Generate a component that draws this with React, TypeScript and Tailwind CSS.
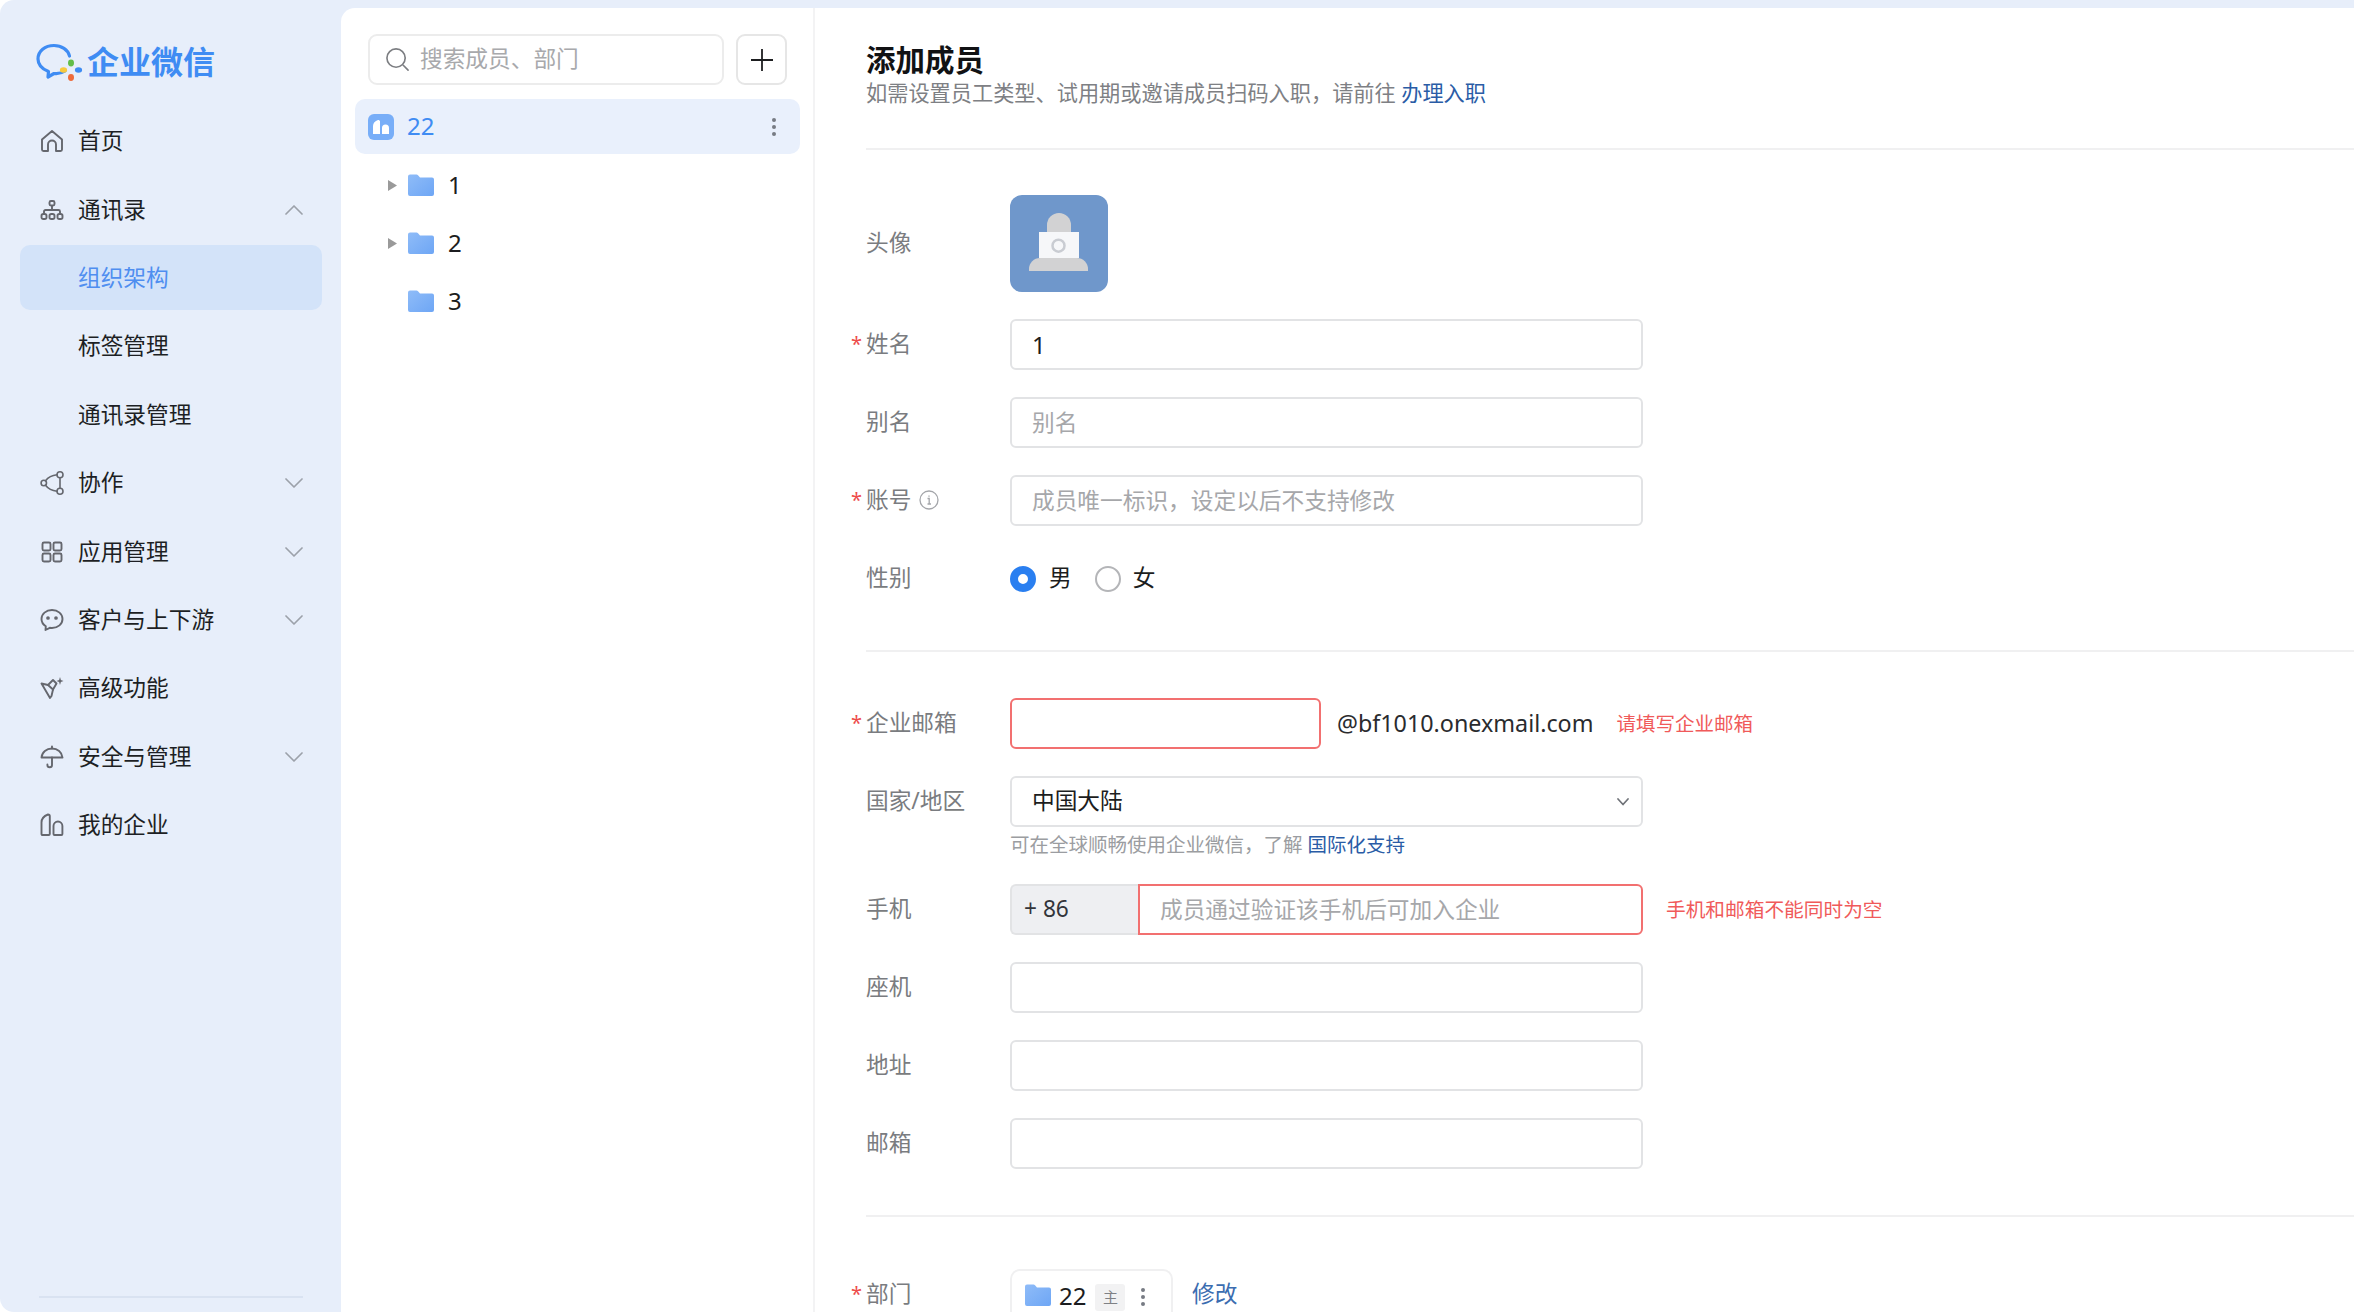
import React from "react";

const FONT = { fontFamily: '"Noto Sans","Noto Sans CJK SC",sans-serif' };

function Ico({ children }: { children: React.ReactNode }) {
  return (
    <svg viewBox="0 0 24 24" className="w-[24px] h-[24px] shrink-0" fill="none" stroke="#65676e" strokeWidth="1.9" strokeLinecap="round" strokeLinejoin="round">
      {children}
    </svg>
  );
}

const icons: Record<string, React.ReactNode> = {
  home: <path d="M2 20.5V10.5L12 2l10 8.500v10a1.500 1.500 0 0 1-1.500 1.500H16v-6.500a4 4 0 0 0-8 0V22H3.500A1.500 1.500 0 0 1 2 20.500z" />,
  org: (
    <>
      <rect x="9.500" y="3" width="5" height="4.500" rx="1.500" />
      <path d="M12 8v4M4 15v-1.500A1.500 1.500 0 0 1 5.500 12h13a1.500 1.500 0 0 1 1.500 1.500V15" />
      <rect x="1.500" y="16" width="5" height="5" rx="1.800" />
      <rect x="9.500" y="16" width="5" height="5" rx="1.800" />
      <rect x="17.500" y="16" width="5" height="5" rx="1.800" />
    </>
  ),
  collab: (
    <g strokeWidth="1.600">
      <circle cx="3.800" cy="12" r="2.700" />
      <circle cx="20" cy="3.800" r="3" />
      <circle cx="20" cy="20.200" r="3" />
      <path d="M5.500 9.800C8 6.500 12 4.300 17 3.800M5.500 14.200C8 17.500 12 19.700 17 20.200M20 6.800v10.400" />
    </g>
  ),
  grid: (
    <>
      <rect x="2.500" y="2.500" width="8" height="8" rx="1.500" />
      <rect x="13.500" y="2.500" width="8" height="8" rx="1.500" />
      <rect x="2.500" y="13.500" width="8" height="8" rx="1.500" />
      <rect x="13.500" y="13.500" width="8" height="8" rx="1.500" />
    </>
  ),
  chat: (
    <>
      <path d="M12 2C6 2 1.500 6 1.500 11c0 3 1.700 5.600 4.300 7.200L5.500 22l4.300-2.200c.7.100 1.400.2 2.200.2 6 0 10.500-4 10.500-9S18 2 12 2z" />
      <circle cx="8" cy="10" r=".9" fill="#65676e" />
      <circle cx="16" cy="10" r=".9" fill="#65676e" />
    </>
  ),
  adv: (
    <>
      <path d="M1.500 7.500L8 9l5 4.500-1.500 6.500-1.500 2z" />
      <path d="M8 9l5-5 3.500 3.500-3.500 6" />
      <path d="M20 1l.9 3 2.600 1-2.600 1-.9 3-.9-3-2.600-1 2.600-1z" fill="#65676e" stroke="none" />
    </>
  ),
  umbrella: (
    <>
      <path d="M1.500 12.500C2 7 6.500 3.500 12 3.500s10 3.500 10.500 9z" />
      <path d="M12 1.500v2M12 12.500v7.500a2.300 2.300 0 0 1-4.600 0v-.5" />
    </>
  ),
  corp: (
    <>
      <path d="M1.500 21V9.500C1.500 6 4 3 8 1.500c1 0 1.800.8 1.800 1.800V21a1 1 0 0 1-1 1H2.500a1 1 0 0 1-1-1z" />
      <path d="M13.500 21V13a4.300 4.300 0 0 1 8.900 0v8a1 1 0 0 1-1 1h-6.900a1 1 0 0 1-1-1z" />
    </>
  ),
};

function Chevron({ up }: { up?: boolean }) {
  return (
    <svg viewBox="0 0 18 10" className="w-[18px] h-[10px] ml-auto" fill="none" stroke="#9ca1aa" strokeWidth="1.700" strokeLinecap="round" strokeLinejoin="round">
      <path d={up ? "M1 9l8-8 8 8" : "M1 1l8 8 8-8"} />
    </svg>
  );
}

function NavItem({ icon, label, chevron }: { icon: string; label: string; chevron?: "up" | "down" }) {
  return (
    <div className="h-[68.4px] flex items-center pl-[40px] pr-[38px] text-[#1d1f24]">
      <Ico>{icons[icon]}</Ico>
      <span className="ml-[14px]">{label}</span>
      {chevron && <Chevron up={chevron === "up"} />}
    </div>
  );
}

function SubItem({ label, active }: { label: string; active?: boolean }) {
  return (
    <div className="h-[68.4px] flex items-center ml-[20px] mr-[19px]">
      <div className={`h-[65px] w-full rounded-[10px] flex items-center pl-[58px] ${active ? "bg-[#d3e3f9] text-[#4f8ef0]" : "text-[#1d1f24]"}`}>{label}</div>
    </div>
  );
}

function Logo() {
  return (
    <svg viewBox="0 0 48 40" className="w-[48px] h-[40px] shrink-0" fill="none">
      <path d="M29 28c-3 2-7 3-11 2.500l-6 3.500 .5-5.500C6 26 2 21.500 2 16 2 8 9 2.500 18 2.500c7.500 0 14 4 15.500 10.500" stroke="#3f8cf3" strokeWidth="3.200" strokeLinecap="round" strokeLinejoin="round" />
      <ellipse cx="35" cy="20" rx="3" ry="3.400" fill="#62bd4a" />
      <ellipse cx="27.500" cy="27" rx="3.600" ry="2.800" fill="#f7c93e" />
      <ellipse cx="35" cy="34.500" rx="3" ry="3.400" fill="#ee6b3b" />
      <ellipse cx="42.500" cy="27" rx="3.600" ry="2.800" fill="#3f8cf3" />
    </svg>
  );
}

function Folder() {
  return (
    <svg viewBox="0 0 26 22" className="w-[26px] h-[22px] shrink-0">
      <defs>
        <linearGradient id="fg" x1="0" y1="0" x2="1" y2="1">
          <stop offset="0" stopColor="#8fbcf8" />
          <stop offset="1" stopColor="#6ea6f5" />
        </linearGradient>
      </defs>
      <path d="M0 2.500A2 2 0 0 1 2 .5h6.500a2 2 0 0 1 1.500.7L12 3.500h12a2 2 0 0 1 2 2V20a2 2 0 0 1-2 2H2a2 2 0 0 1-2-2z" fill="url(#fg)" />
    </svg>
  );
}

function Dots() {
  return (
    <svg viewBox="0 0 6 20" className="w-[6px] h-[20px]" fill="#777b83">
      <circle cx="3" cy="3" r="2" />
      <circle cx="3" cy="10" r="2" />
      <circle cx="3" cy="17" r="2" />
    </svg>
  );
}

function TreeRow({ label, arrow }: { label: string; arrow?: boolean }) {
  return (
    <div className="h-[58px] flex items-center text-[#1c1d20]">
      <div className="w-[67px] pl-[47px] shrink-0">
        {arrow && (
          <svg viewBox="0 0 9 11" className="w-[9px] h-[11px]">
            <path d="M0 0l9 5.500L0 11z" fill="#9a9a9a" />
          </svg>
        )}
      </div>
      <Folder />
      <span className="ml-[14px] text-[24px]">{label}</span>
    </div>
  );
}

function Label({ text, req, info }: { text: string; req?: boolean; info?: boolean }) {
  return (
    <div className="w-[144px] shrink-0 flex items-center text-[#7a7c80]">
      {req && <span className="-ml-[15px] w-[15px] text-[#ee4b4b] text-[20px]">*</span>}
      <span>{text}</span>
      {info && (
        <svg viewBox="0 0 20 20" className="w-[20px] h-[20px] ml-[8px]" fill="none" stroke="#a4a6aa" strokeWidth="1.300">
          <circle cx="10" cy="10" r="9" />
          <path d="M8.500 8.500H10.200V14M8.500 14h3.500M10 5.500v1.200" />
        </svg>
      )}
    </div>
  );
}

function Field({ placeholder, value, error, className }: { placeholder?: string; value?: string; error?: boolean; className?: string }) {
  return (
    <input
      readOnly
      placeholder={placeholder}
      defaultValue={value}
      className={`h-[51px] px-[20px] rounded-[6px] border-2 outline-none bg-white text-[#1c1d20] placeholder:text-[#a6a7aa] ${error ? "border-[#f27070]" : "border-[#e2e3e5]"} ${className ?? "w-[633px]"}`}
    />
  );
}

function Row({ children, className }: { children: React.ReactNode; className?: string }) {
  return <div className={`flex items-center h-[51px] ${className ?? "mb-[27px]"}`}>{children}</div>;
}

export default function App() {
  return (
    <div className="flex h-[1312px] w-[2354px] overflow-hidden bg-white text-[22.7px]" style={FONT}>
      <aside className="w-[341px] shrink-0 bg-[#e7eefa] rounded-l-[14px] flex flex-col">
        <div className="h-[107px] pl-[36px] pt-[43px] flex items-start">
          <Logo />
          <span className="ml-[3px] text-[32px] leading-[38px] font-bold text-[#3f8cf3]">企业微信</span>
        </div>
        <NavItem icon="home" label="首页" />
        <NavItem icon="org" label="通讯录" chevron="up" />
        <SubItem label="组织架构" active />
        <SubItem label="标签管理" />
        <SubItem label="通讯录管理" />
        <NavItem icon="collab" label="协作" chevron="down" />
        <NavItem icon="grid" label="应用管理" chevron="down" />
        <NavItem icon="chat" label="客户与上下游" chevron="down" />
        <NavItem icon="adv" label="高级功能" />
        <NavItem icon="umbrella" label="安全与管理" chevron="down" />
        <NavItem icon="corp" label="我的企业" />
        <div className="mt-auto mb-[14px] ml-[39px] mr-[38px] h-[2px] bg-[#d9e2f1]" />
      </aside>

      <div className="flex-1 min-w-0 bg-[#e7eefa] pt-[8px]">
        <div className="flex h-full bg-white rounded-tl-[14px] overflow-hidden">
          <section className="w-[474px] shrink-0 border-r-2 border-[#f3f3f4] pt-[26px]">
            <div className="flex pl-[27px] gap-[12px]">
              <div className="w-[356px] h-[51px] rounded-[9px] border-2 border-[#ececec] flex items-center pl-[15px] text-[#a8a9ac]">
                <svg viewBox="0 0 26 26" className="w-[25px] h-[25px] shrink-0" fill="none" stroke="#7c7e82" strokeWidth="1.700" strokeLinecap="round">
                  <circle cx="11.500" cy="11.500" r="9.500" />
                  <path d="M19 19l5 5" />
                </svg>
                <span className="ml-[10px]">搜索成员、部门</span>
              </div>
              <div className="w-[51px] h-[51px] rounded-[9px] border-2 border-[#e6e6e6] flex items-center justify-center">
                <svg viewBox="0 0 22 22" className="w-[22px] h-[22px]" stroke="#1d1e20" strokeWidth="1.800">
                  <path d="M11 0v22M0 11h22" />
                </svg>
              </div>
            </div>
            <div className="ml-[14px] mr-[13px] mt-[14px] h-[55px] rounded-[10px] bg-[#e9f0fc] flex items-center pl-[13px] pr-[23px] text-[#3f8cf3]">
              <div className="w-[26px] h-[26px] rounded-[6px] bg-[#78aef8] flex items-center justify-center">
                <svg viewBox="0 0 16 14" className="w-[16px] h-[14px]" fill="#fff">
                  <path d="M0 14V6C0 3 2 1 5 0c1 0 2 .5 2 1.500V14zM9 14V8a3.500 3.500 0 0 1 7 0v6z" />
                </svg>
              </div>
              <span className="ml-[13px] -mt-[2px] text-[24px]">22</span>
              <div className="ml-auto">
                <Dots />
              </div>
            </div>
            <div className="mt-[2px]">
              <TreeRow label="1" arrow />
              <TreeRow label="2" arrow />
              <TreeRow label="3" />
            </div>
          </section>

          <main className="flex-1 min-w-0 pl-[51px] pt-[32px]">
            <h1 className="text-[29.500px] leading-[40px] font-bold text-[#111214]">添加成员</h1>
            <p className="-mt-[1px] text-[21.200px] leading-[28px] text-[#7e8084]">
              如需设置员工类型、试用期或邀请成员扫码入职，请前往 <span className="text-[#2a5ca6]">办理入职</span>
            </p>
            <div className="mt-[41px] h-[2px] bg-[#f0f0f1]" />

            <div className="mt-[45px] flex items-center mb-[27px]">
              <Label text="头像" />
              <div className="w-[98px] h-[97px] rounded-[12px] bg-[#6f97cb]">
                <svg viewBox="0 0 98 97" className="w-[98px] h-[97px]">
                  <path d="M37 37V30a12 12 0 0 1 24 0v7z" fill="#d2d2d3" />
                  <rect x="29" y="37" width="40" height="26" fill="#f6f7f9" />
                  <circle cx="48.500" cy="50.700" r="6" fill="none" stroke="#c9ccd2" strokeWidth="2.500" />
                  <path d="M19 76v-2a11 11 0 0 1 11-11h37a11 11 0 0 1 11 11v2z" fill="#d2d2d3" />
                </svg>
              </div>
            </div>

            <Row>
              <Label text="姓名" req />
              <Field value="1" className="w-[633px] !text-[24px]" />
            </Row>
            <Row>
              <Label text="别名" />
              <Field placeholder="别名" />
            </Row>
            <Row>
              <Label text="账号" req info />
              <Field placeholder="成员唯一标识，设定以后不支持修改" />
            </Row>
            <Row className="mb-0">
              <Label text="性别" />
              <span className="w-[26px] h-[26px] rounded-full border-[8px] border-[#2a7ff0] bg-white" />
              <span className="ml-[13px] text-[#1c1d20]">男</span>
              <span className="ml-[23px] w-[26px] h-[26px] rounded-full border-2 border-[#b4b5b8] bg-white" />
              <span className="ml-[12px] text-[#1c1d20]">女</span>
            </Row>
            <div className="mt-[46px] h-[2px] bg-[#f0f0f1]" />

            <Row className="mt-[46px] mb-[27px]">
              <Label text="企业邮箱" req />
              <Field error className="w-[311px]" />
              <span className="ml-[16px] text-[23.300px] text-[#2a2b2e]">@bf1010.onexmail.com</span>
              <span className="ml-[23px] text-[19.500px] text-[#f05a5a]">请填写企业邮箱</span>
            </Row>

            <Row className="mb-0">
              <Label text="国家/地区" />
              <div className="w-[633px] h-[51px] rounded-[6px] border-2 border-[#e2e3e5] flex items-center pl-[20px] pr-[12px] text-[#1c1d20]">
                中国大陆
                <svg viewBox="0 0 12 8" className="w-[12px] h-[8px] ml-auto" fill="none" stroke="#6f7278" strokeWidth="1.700" strokeLinecap="round" strokeLinejoin="round">
                  <path d="M1 1l5 5.500L11 1" />
                </svg>
              </div>
            </Row>
            <div className="pl-[144px] h-[35px] mb-[22px] flex items-center text-[19.500px] text-[#9b9da1]">
              可在全球顺畅使用企业微信，了解&nbsp;<span className="text-[#2a5ca6]">国际化支持</span>
            </div>

            <Row>
              <Label text="手机" />
              <div className="w-[128px] h-[51px] rounded-l-[6px] border-2 border-r-0 border-[#e2e3e5] bg-[#eeeff2] flex items-center pl-[12px] text-[#33353a]">+ 86</div>
              <Field error placeholder="成员通过验证该手机后可加入企业" className="w-[505px] !rounded-l-none" />
              <span className="ml-[23px] text-[19.700px] text-[#f05a5a]">手机和邮箱不能同时为空</span>
            </Row>
            <Row>
              <Label text="座机" />
              <Field />
            </Row>
            <Row>
              <Label text="地址" />
              <Field />
            </Row>
            <Row className="mb-0">
              <Label text="邮箱" />
              <Field />
            </Row>
            <div className="mt-[46px] h-[2px] bg-[#f0f0f1]" />

            <div className="mt-[52px] flex items-start">
              <div className="h-[51px] flex items-center">
                <Label text="部门" req />
              </div>
              <div className="w-[163px] h-[60px] rounded-[10px] border-2 border-[#f0f0f1] flex items-start pl-[13px] pt-[13px] text-[#1c1d20]">
                <Folder />
                <span className="ml-[8px] leading-[24px] text-[24px]">22</span>
                <span className="ml-[9px] w-[30px] h-[27px] rounded-[3px] bg-[#f2f2f3] text-[15px] text-[#7f8185] flex items-center justify-center">主</span>
                <span className="ml-[15px] mt-[3px]">
                  <Dots />
                </span>
              </div>
              <span className="ml-[19px] h-[51px] flex items-center text-[#3b6db0]">修改</span>
            </div>
          </main>
        </div>
      </div>
    </div>
  );
}
